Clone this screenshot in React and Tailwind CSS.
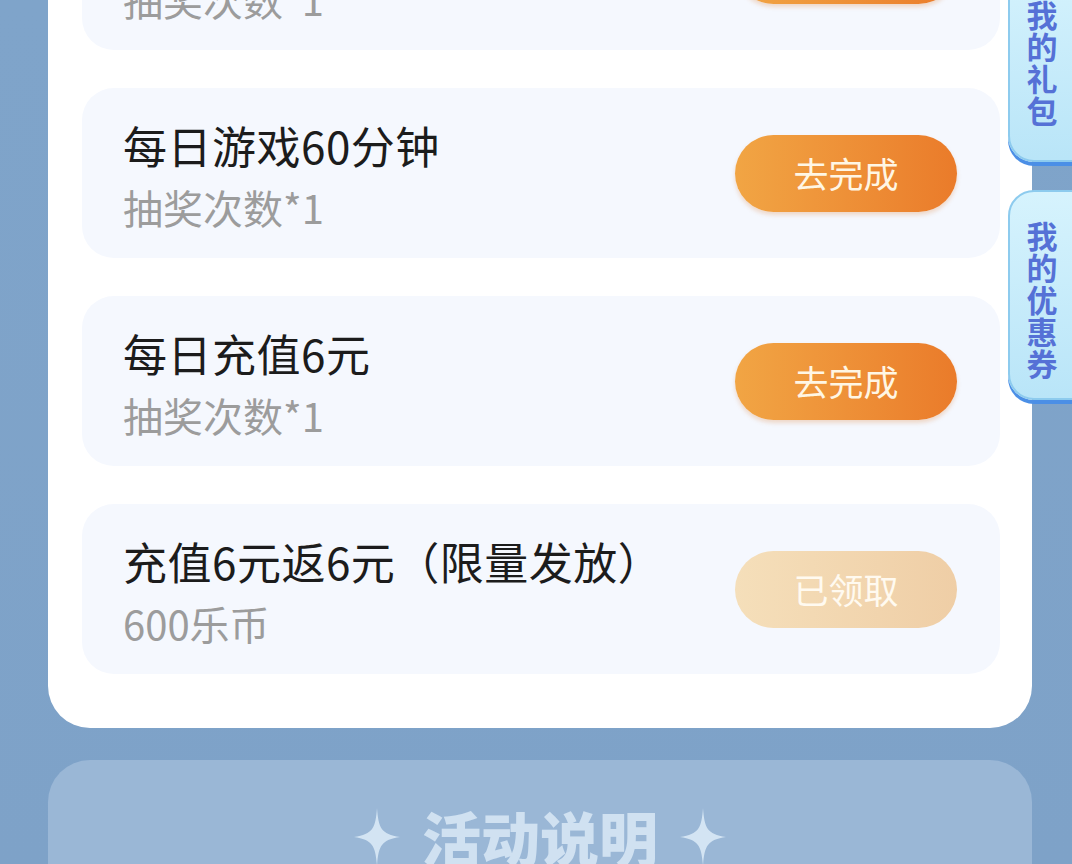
// ============================================
// Page: Lottery tasks (task list + side tabs)
// ============================================

const FONT = { fontFamily: '"Noto Sans CJK SC", "Noto Sans", sans-serif' };

const tasks = [
  { title: "每日登录", sub: "抽奖次数*1", done: false },
  { title: "每日游戏60分钟", sub: "抽奖次数*1", done: false },
  { title: "每日充值6元", sub: "抽奖次数*1", done: false },
  { title: "充值6元返6元（限量发放）", sub: "600乐币", done: true },
];

const Sparkle = () => (
  <svg width="46" height="58" viewBox="0 0 46 58" className="shrink-0">
    <path
      d="M23 0 C24.5 20 27 26 46 29 C27 32 24.5 38 23 58 C21.5 38 19 32 0 29 C19 26 21.5 20 23 0 Z"
      fill="#d3e4f3"
    />
  </svg>
);

const TaskRow = ({ task }) => (
  <div className="flex h-[170px] items-center justify-between rounded-[32px] bg-[#f5f8fe] pl-[41px] pr-[43px]">
    <div className="flex flex-col gap-[12px] pt-[4px]">
      <p className="text-[44px] leading-[52px] tracking-[0.5px] text-[#1c1c1c]">
        {task.title}
      </p>
      <p className="text-[40px] leading-[48px] text-[#9c9c9c]">{task.sub}</p>
    </div>
    {task.done ? (
      <button className="flex h-[77px] w-[222px] items-center justify-center rounded-full bg-gradient-to-r from-[#f5dfba] to-[#efcea6] text-[35px] text-[#fffaf0]">
        已领取
      </button>
    ) : (
      <button className="flex h-[77px] w-[222px] items-center justify-center rounded-full bg-gradient-to-r from-[#f1a544] to-[#ea7b2a] text-[35px] text-[#fff6e4] shadow-[0_3px_4px_rgba(220,120,40,0.25)]">
        去完成
      </button>
    )}
  </div>
);

const SideTab = ({ chars, className }) => (
  <div
    className={`absolute left-[1008px] w-[90px] rounded-l-[26px] border-2 border-[#8dcbee] bg-gradient-to-b from-[#d6f3fd] to-[#b9e5f8] shadow-[0_4px_0_#4b8fe6] ${className}`}
  >
    <div className="flex w-[64px] flex-col items-center text-[31px] font-semibold leading-[32px] text-[#5571d6]">
      {chars.split("").map((c, i) => (
        <span key={i}>{c}</span>
      ))}
    </div>
  </div>
);

export default function App() {
  return (
    <div
      className="relative h-[864px] w-full overflow-hidden bg-gradient-to-b from-[#7fa4ca] to-[#7ea2c8]"
      style={FONT}
    >
      <div className="pl-[48px] pr-[40px]">
        {/* Task card */}
        <div className="rounded-b-[42px] bg-white pb-[54px] pl-[34px] pr-[32px]">
          <div className="-mt-[120px] flex flex-col gap-[38px]">
            {tasks.map((t, i) => (
              <TaskRow key={i} task={t} />
            ))}
          </div>
        </div>

        {/* Activity rules */}
        <div className="mt-[32px] h-[200px] rounded-t-[42px] bg-[#9ab7d6] pt-[46px]">
          <div className="flex items-center justify-center gap-[22px]">
            <Sparkle />
            <h2 className="text-[59px] font-black leading-[62px] text-[#d0e1f1]">
              活动说明
            </h2>
            <Sparkle />
          </div>
        </div>
      </div>

      {/* Side tabs */}
      <SideTab chars="我的礼包" className="top-[-40px] h-[202px] pt-[36px]" />
      <SideTab chars="我的优惠券" className="top-[190px] h-[210px] pt-[27px]" />
    </div>
  );
}
